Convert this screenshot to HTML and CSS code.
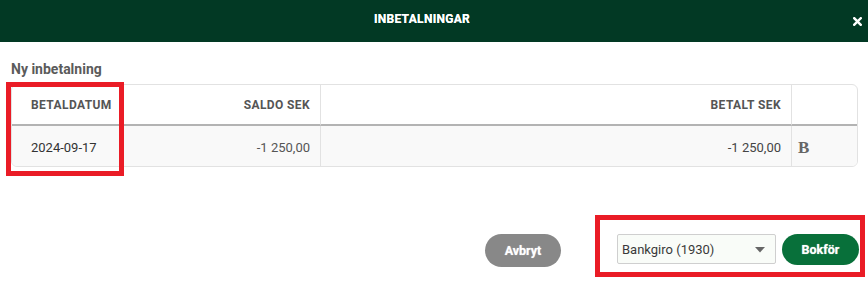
FILE: index.html
```html
<!DOCTYPE html>
<html lang="sv">
<head>
<meta charset="utf-8">
<title>Inbetalningar</title>
<link rel="stylesheet" href="styles.css">
</head>
<body>
<div class="dialog">
  <header class="topbar">
    <h1 class="title">INBETALNINGAR</h1>
    <button class="close" aria-label="Stäng">
      <svg width="9" height="9" viewBox="0 0 9 9"><path d="M1.2 1.2 L7.8 7.8 M7.8 1.2 L1.2 7.8" stroke="#fff" stroke-width="2.4" stroke-linecap="square"/></svg>
    </button>
  </header>
  <main class="content">
    <h2 class="subtitle">Ny inbetalning</h2>
    <div class="table">
      <div class="th c1">BETALDATUM</div>
      <div class="th c2 right sep">SALDO SEK</div>
      <div class="th c3 right sep">BETALT SEK</div>
      <div class="th c4"></div>
      <div class="td c1 date">2024-09-17</div>
      <div class="td c2 right sep">-1 250,00</div>
      <div class="td c3 right sep strong">-1 250,00</div>
      <div class="td c4 b">B</div>
    </div>
  </main>
  <footer class="actions">
    <button class="btn cancel">Avbryt</button>
    <div class="select">
      <span>Bankgiro (1930)</span>
      <svg class="caret" width="10" height="6" viewBox="0 0 10 6"><path d="M0 0 H10 L5 5.5 Z" fill="#666"/></svg>
    </div>
    <button class="btn book">Bokför</button>
  </footer>
  <div class="mark mark-date"></div>
  <div class="mark mark-actions"></div>
</div>
</body>
</html>
```

FILE: styles.css
```css
* { box-sizing: border-box; }
html, body { margin: 0; padding: 0; background: #fff; }
body { font-family: Roboto, "Liberation Sans", Arial, sans-serif; }

.dialog { position: relative; width: 868px; height: 284px; overflow: hidden; }

.topbar {
  height: 42px;
  background: #023924;
  display: flex;
  align-items: center;
  justify-content: center;
  position: relative;
}
.title {
  margin: 0 0 5px 0;
  padding-right: 24px;
  color: #fff;
  font-size: 12px;
  font-weight: 700;
  letter-spacing: 0.3px;
  text-shadow: 0 0 0.6px #fff;
}
.close {
  position: absolute;
  right: 6px;
  top: 17px;
  border: 0;
  background: none;
  padding: 0;
  width: 9px;
  height: 9px;
  display: flex;
}

.content { padding: 17px 10px 0 11px; }
.subtitle {
  margin: 0 0 5px 0;
  height: 20px;
  line-height: 20px;
  font-size: 14px;
  font-weight: 700;
  color: #5b5b5b;
}

.table {
  display: grid;
  grid-template-columns: 109px 200px 471px 1fr;
  border: 1px solid #e2e2e2;
  border-radius: 6px;
  overflow: hidden;
}
.th {
  height: 41px;
  border-bottom: 2px solid #b3b3b3;
  display: flex;
  align-items: center;
  font-size: 12px;
  font-weight: 700;
  color: #555;
  letter-spacing: 0.4px;
  padding: 0 10px 0 0;
}
.td {
  height: 40px;
  display: flex;
  align-items: center;
  background: #f9f9f9;
  font-size: 13px;
  color: #555;
  padding: 0 10px 0 0;
}
.c1 { padding-left: 19px; }
.right { justify-content: flex-end; }
.sep { border-right: 1px solid #e2e2e2; }
.date { color: #333; padding-top: 2px; }
.c2.td, .c3.td { padding-top: 2px; }
.strong { color: #444; }
.b {
  font-family: "Liberation Serif", "DejaVu Serif", serif;
  font-weight: 700;
  font-size: 17px;
  color: #666;
  padding-left: 6px;
  padding-top: 3px;
}

.actions {
  position: absolute;
  top: 234px;
  right: 9px;
  display: flex;
  align-items: flex-start;
}
.btn {
  border: 0;
  color: #fff;
  font-family: Roboto, "Liberation Sans", Arial, sans-serif;
  font-weight: 700;
  font-size: 12.5px;
  border-radius: 17px;
  padding: 0;
  text-shadow: 0 0 1px rgba(255,255,255,0.7);
}
.cancel {
  width: 76px;
  height: 33px;
  background: #888;
  margin-right: 56px;
}
.select {
  width: 159px;
  height: 30px;
  border: 1px solid #cfcfcf;
  border-radius: 2px;
  background: #f9fcf8;
  display: flex;
  align-items: center;
  justify-content: space-between;
  padding: 0 10px 0 4px;
  font-size: 13px;
  color: #3a3a3a;
}
.caret { margin-top: 1px; }
.book {
  width: 77px;
  height: 31px;
  margin-left: 6px;
  background: #08703a;
}

.mark {
  position: absolute;
  border: 5px solid #ea1c26;
  pointer-events: none;
}
.mark-date { left: 6px; top: 82px; width: 118px; height: 94px; }
.mark-actions { left: 595px; top: 215px; width: 270px; height: 62px; }
```
